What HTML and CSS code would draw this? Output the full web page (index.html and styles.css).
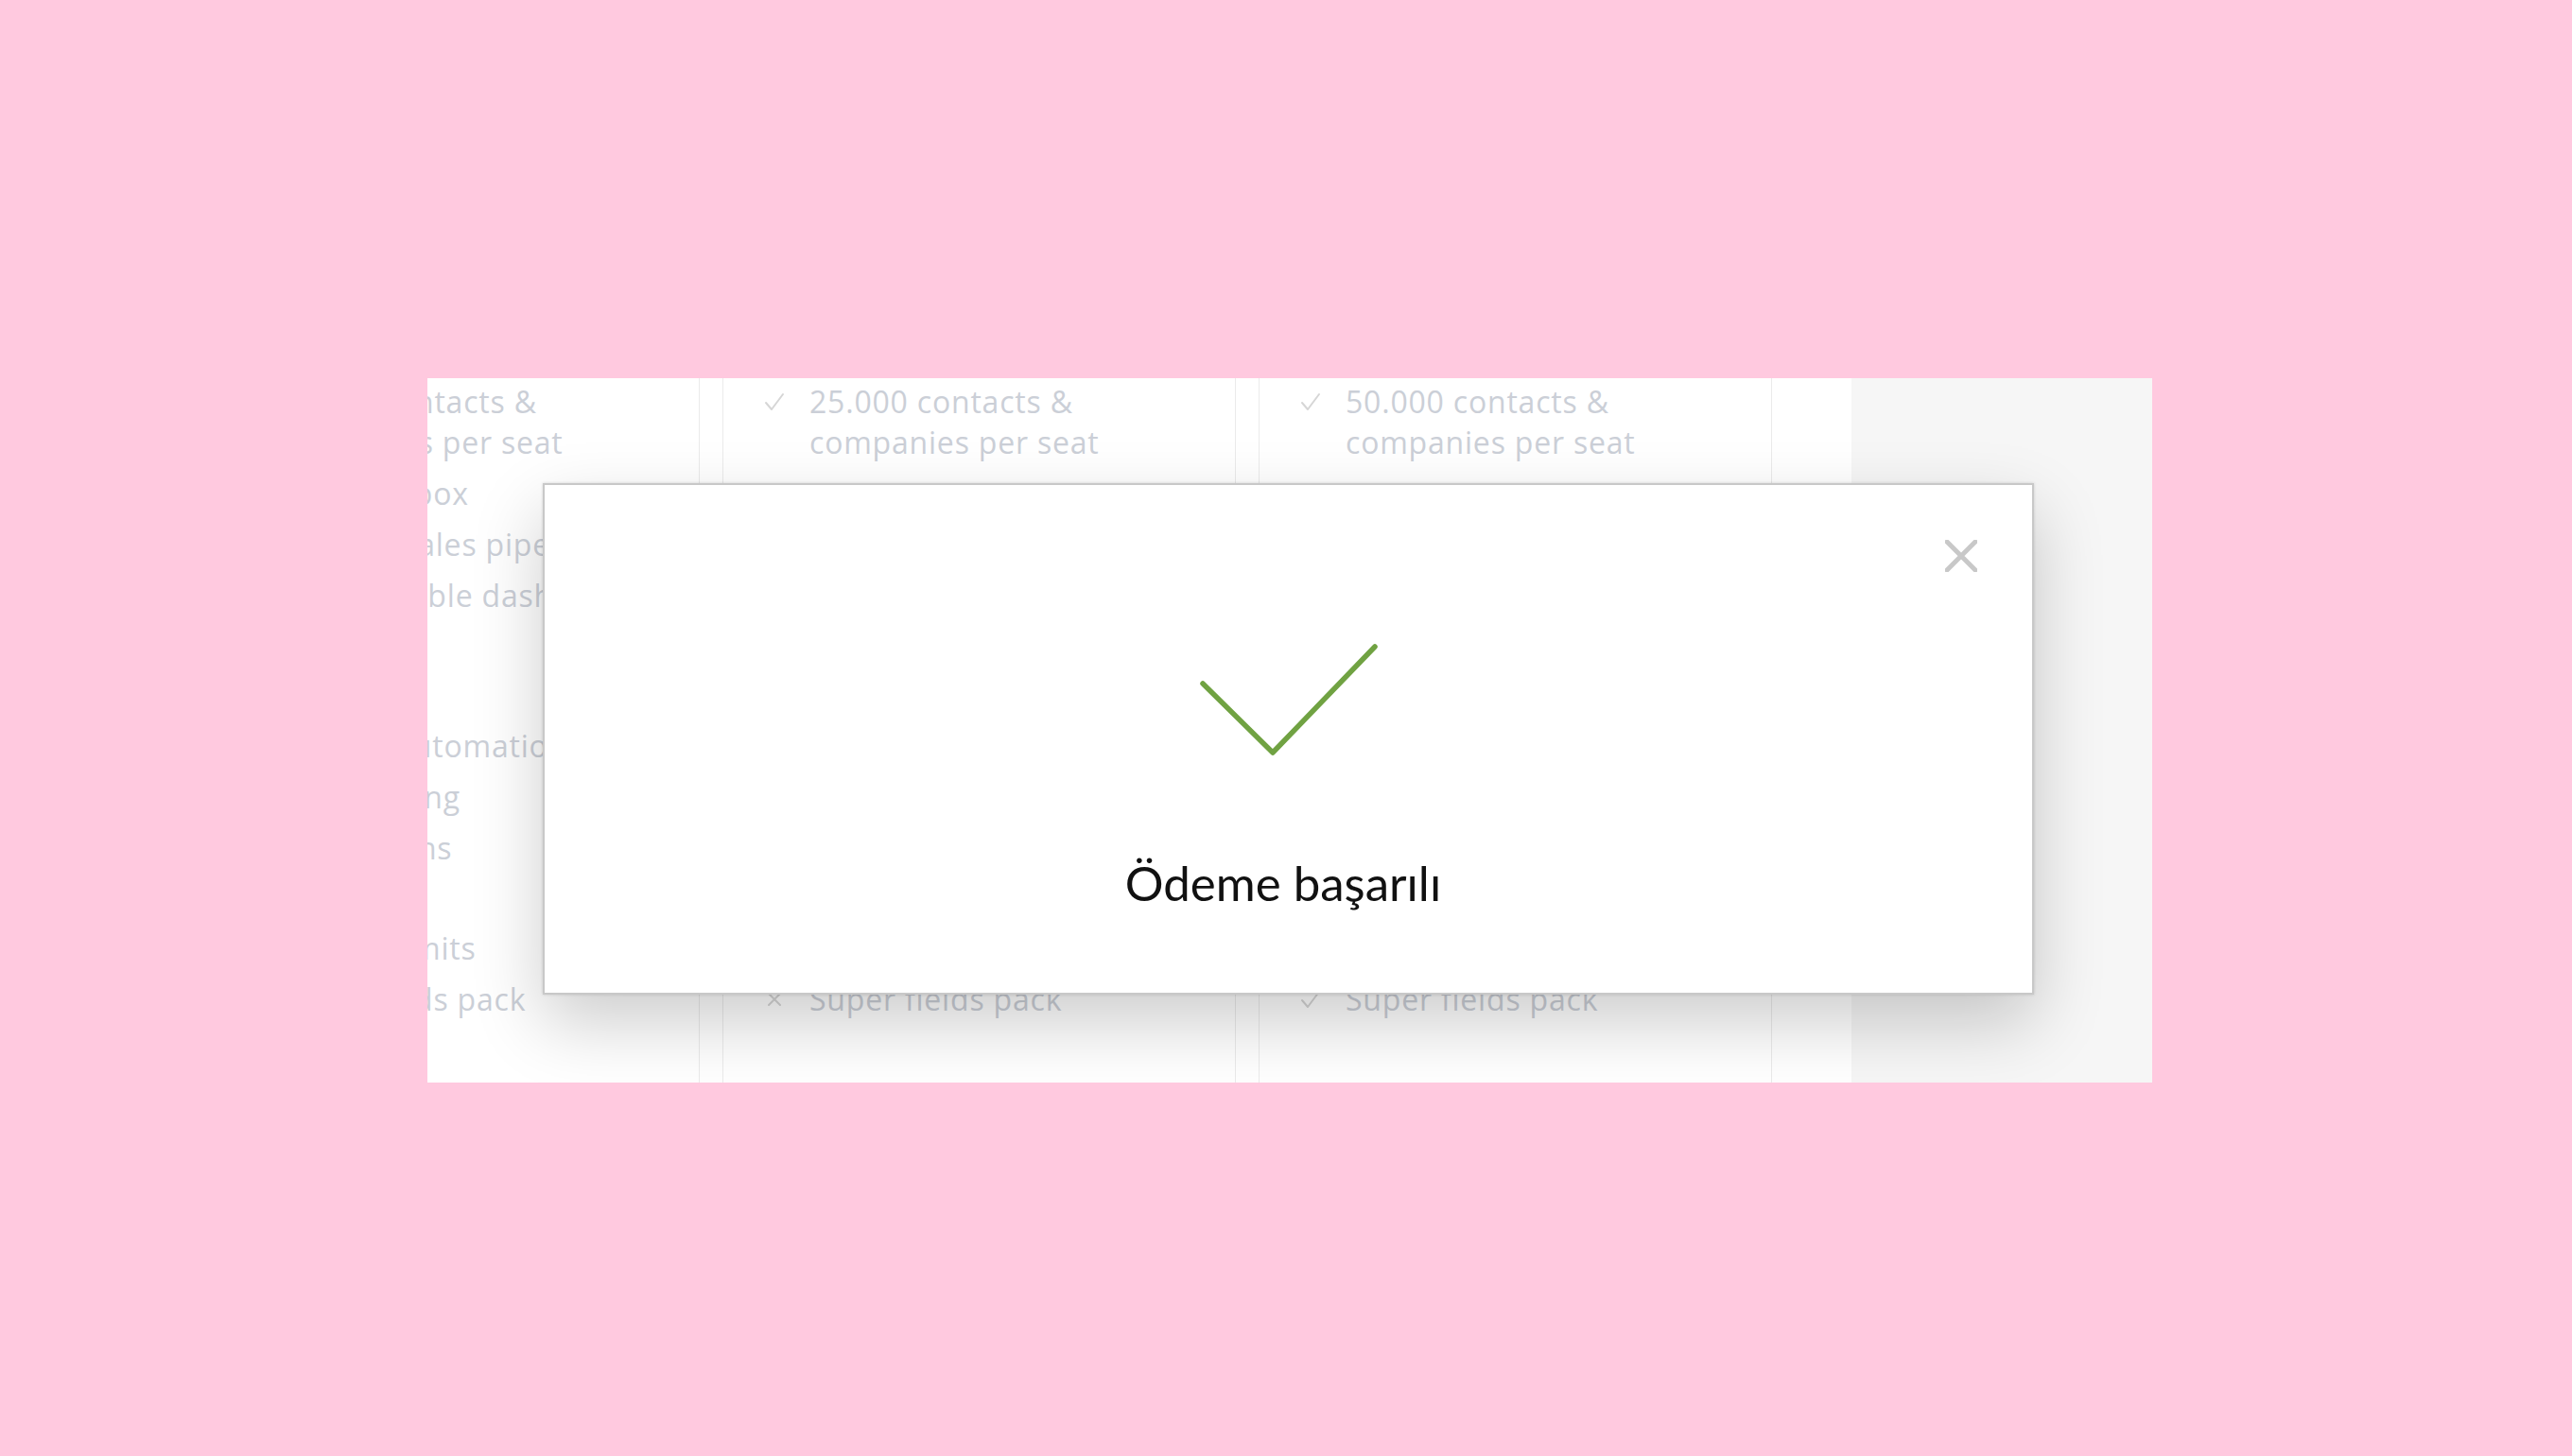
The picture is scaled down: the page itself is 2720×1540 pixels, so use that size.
FILE: index.html
```html
<!DOCTYPE html>
<html lang="tr">
<head>
<meta charset="utf-8">
<title>Ödeme başarılı</title>
<link rel="stylesheet" href="styles.css">
</head>
<body>
<div class="shot">
  <div class="plans">
    <div class="plan plan-clipped">
      <ul class="group">
        <li><span class="ico"><svg viewBox="0 0 22 20"><polyline points="2,11 8,18 20,2"/></svg></span><span class="txt">10.000 contacts &amp; companies per seat</span></li>
        <li><span class="ico"><svg viewBox="0 0 22 20"><polyline points="2,11 8,18 20,2"/></svg></span><span class="txt">Shared inbox</span></li>
        <li><span class="ico"><svg viewBox="0 0 22 20"><polyline points="2,11 8,18 20,2"/></svg></span><span class="txt">Multiple sales pipelines</span></li>
        <li><span class="ico"><svg viewBox="0 0 22 20"><polyline points="2,11 8,18 20,2"/></svg></span><span class="txt">Customizable dashboards</span></li>
      </ul>
      <ul class="group group-lg">
        <li><span class="ico"><svg viewBox="0 0 22 20"><polyline points="2,11 8,18 20,2"/></svg></span><span class="txt">Custom automation</span></li>
        <li><span class="ico"><svg viewBox="0 0 22 20"><polyline points="2,11 8,18 20,2"/></svg></span><span class="txt">Lead scoring</span></li>
        <li><span class="ico"><svg viewBox="0 0 22 20"><polyline points="2,11 8,18 20,2"/></svg></span><span class="txt">Integrations</span></li>
      </ul>
      <ul class="group group-md">
        <li><span class="ico"><svg viewBox="0 0 22 20"><polyline points="2,11 8,18 20,2"/></svg></span><span class="txt">Custom limits</span></li>
        <li><span class="ico"><svg viewBox="0 0 22 20"><polyline points="2,11 8,18 20,2"/></svg></span><span class="txt">Super fields pack</span></li>
      </ul>
    </div>
    <div class="plan">
      <ul class="group">
        <li><span class="ico"><svg viewBox="0 0 22 20"><polyline points="2,11 8,18 20,2"/></svg></span><span class="txt">25.000 contacts &amp; companies per seat</span></li>
      </ul>
      <ul class="group group-far">
        <li><span class="ico"><svg viewBox="0 0 22 20"><polyline points="2,11 8,18 20,2"/></svg></span><span class="txt">Custom limits</span></li>
        <li><span class="ico"><svg viewBox="0 0 22 20"><path d="M5 4 L17 16 M17 4 L5 16"/></svg></span><span class="txt">Super fields pack</span></li>
      </ul>
    </div>
    <div class="plan">
      <ul class="group">
        <li><span class="ico"><svg viewBox="0 0 22 20"><polyline points="2,11 8,18 20,2"/></svg></span><span class="txt">50.000 contacts &amp; companies per seat</span></li>
      </ul>
      <ul class="group group-far">
        <li><span class="ico"><svg viewBox="0 0 22 20"><polyline points="2,11 8,18 20,2"/></svg></span><span class="txt">Custom limits</span></li>
        <li><span class="ico"><svg viewBox="0 0 22 20"><polyline points="2,11 8,18 20,2"/></svg></span><span class="txt">Super fields pack</span></li>
      </ul>
    </div>
  </div>
  <div class="aside"></div>

  <div class="modal">
    <button class="close" type="button" aria-label="Kapat">
      <svg viewBox="0 0 34 34"><path d="M2 2 L32 32 M32 2 L2 32"/></svg>
    </button>
    <svg class="success-check" viewBox="0 0 190 124"><polyline points="4,43 78,116 186,4"/></svg>
    <p class="message">Ödeme başarılı</p>
  </div>
</div>
</body>
</html>
```

FILE: styles.css
```css
html, body {
  margin: 0;
  padding: 0;
}

body {
  background: #ffc9df;
  min-height: 100vh;
  box-sizing: border-box;
  padding: 400px 0 0 452px;
  font-family: "Open Sans", "Noto Sans", sans-serif;
}

.shot {
  position: relative;
  width: 1824px;
  height: 745px;
  display: flex;
  overflow: hidden;
  background: #ffffff;
}

.plans {
  flex: 0 0 1506px;
  display: flex;
  gap: 24px;
  overflow: hidden;
  background: #ffffff;
}

.plan {
  flex: 0 0 543px;
  box-sizing: border-box;
  border-left: 1px solid #ebebeb;
  border-right: 1px solid #ebebeb;
  padding: 3px 20px 0 43px;
}

.plan-clipped {
  margin-left: -255px;
}

.aside {
  flex: 1;
  background: #f6f6f6;
}

.group {
  list-style: none;
  margin: 0;
  padding: 0;
  display: flex;
  flex-direction: column;
  gap: 11px;
}

.group-lg {
  margin-top: 116px;
}

.group-md {
  margin-top: 63px;
}

.group-far {
  margin-top: 492px;
}

.group li {
  display: flex;
  align-items: flex-start;
}

.ico {
  flex: 0 0 22px;
  height: 43px;
  margin-right: 26px;
  display: flex;
  align-items: center;
}

.ico svg {
  width: 22px;
  height: 20px;
  fill: none;
  stroke: #d6d6d6;
  stroke-width: 2;
  stroke-linecap: round;
  stroke-linejoin: round;
}

.txt {
  flex: 1;
  font-size: 32px;
  line-height: 43px;
  letter-spacing: 0.8px;
  color: #cbcfd7;
}

.modal {
  position: absolute;
  left: 122px;
  top: 111px;
  width: 1577px;
  height: 541px;
  box-sizing: border-box;
  border: 2px solid #c8c8c8;
  background: #ffffff;
  box-shadow: 0 0 3px rgba(0, 0, 0, 0.14), 0 30px 70px rgba(0, 0, 0, 0.2);
  display: flex;
  flex-direction: column;
  align-items: center;
  padding-top: 167px;
}

.close {
  position: absolute;
  top: 58px;
  right: 58px;
  width: 34px;
  height: 34px;
  padding: 0;
  margin: 0;
  border: 0;
  background: transparent;
  cursor: pointer;
}

.close svg {
  display: block;
  width: 34px;
  height: 34px;
  fill: none;
  stroke: #c8c8c8;
  stroke-width: 5;
  stroke-linecap: round;
}

.success-check {
  display: block;
  width: 190px;
  height: 124px;
  fill: none;
  stroke: #70a242;
  stroke-width: 5.5;
  stroke-linecap: round;
  stroke-linejoin: round;
}

.message {
  margin: 100px 11px 0 0;
  font-family: "Lato", "Noto Sans", sans-serif;
  font-size: 51px;
  line-height: 60px;
  color: #111111;
}
```
